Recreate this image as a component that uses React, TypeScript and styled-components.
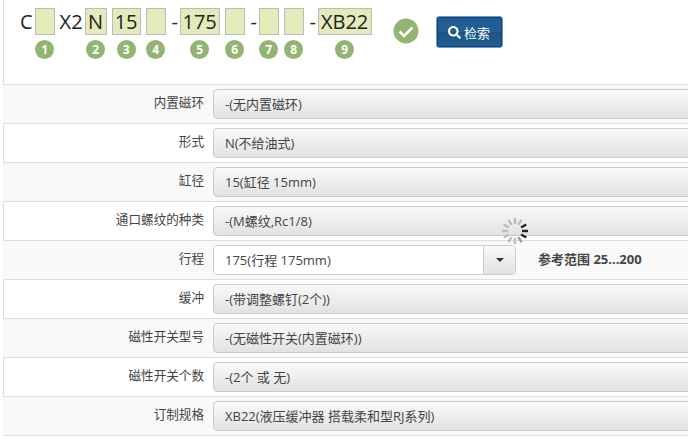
import { createGlobalStyle } from 'styled-components';
import styled from 'styled-components';
import { FaSearch } from 'react-icons/fa';

type Segment = {
  before?: string;
  value: string;
  width: number;
  num: number;
};

type Option = {
  label: string;
  value: string;
  range?: string;
};

const SEGMENTS: Segment[] = [
  { before: 'C', value: '', width: 20, num: 1 },
  { before: 'X2', value: 'N', width: 22, num: 2 },
  { value: '15', width: 29, num: 3 },
  { value: '', width: 20, num: 4 },
  { before: '-', value: '175', width: 40, num: 5 },
  { value: '', width: 20, num: 6 },
  { before: '-', value: '', width: 20, num: 7 },
  { value: '', width: 20, num: 8 },
  { before: '-', value: 'XB22', width: 54, num: 9 },
];

const OPTIONS: Option[] = [
  { label: '内置磁环', value: '-(无内置磁环)' },
  { label: '形式', value: 'N(不给油式)' },
  { label: '缸径', value: '15(缸径 15mm)' },
  { label: '通口螺纹的种类', value: '-(M螺纹,Rc1/8)' },
  { label: '行程', value: '175(行程 175mm)', range: '参考范围 25...200' },
  { label: '缓冲', value: '-(带调整螺钉(2个))' },
  { label: '磁性开关型号', value: '-(无磁性开关(内置磁环))' },
  { label: '磁性开关个数', value: '-(2个 或 无)' },
  { label: '订制规格', value: 'XB22(液压缓冲器 搭载柔和型RJ系列)' },
];

const Global = createGlobalStyle`
  html, body {
    margin: 0;
    padding: 0;
    height: 440px;
    overflow: hidden;
    background: #fff;
  }
  body {
    font-family: "Open Sans", "Noto Sans CJK SC", sans-serif;
    color: #333;
  }
`;

function App() {
  return (
    <Root>
      <Global />
      <CodeBox>
        <Segments>
          {SEGMENTS.map((s) => (
            <SegmentWrap key={s.num}>
              {s.before && <Fixed $dash={s.before === '-'}>{s.before}</Fixed>}
              <SegmentCol>
                <ValueBox $width={s.width}>{s.value}</ValueBox>
                <Num>{s.num}</Num>
              </SegmentCol>
            </SegmentWrap>
          ))}
        </Segments>
        <Check>
          <svg width="26" height="26" viewBox="0 0 26 26">
            <circle cx="13" cy="13" r="12.5" fill="#93b573" />
            <path d="M6.5 13.5l4.5 4.5 8.5-8.5" fill="none" stroke="#fff" strokeWidth="2.6" />
          </svg>
        </Check>
        <SearchButton>
          <FaSearch size={13} />
          检索
        </SearchButton>
      </CodeBox>
      <Rows>
        {OPTIONS.map((o, i) => (
          <Row key={o.label} $odd={i % 2 === 1}>
            <Label>{o.label}</Label>
            {o.range ? (
              <>
                <InputGroup>
                  <TextInput>{o.value}</TextInput>
                  <Addon>
                    <Caret />
                  </Addon>
                </InputGroup>
                <RangeNote>{o.range}</RangeNote>
              </>
            ) : (
              <SelectBox>{o.value}</SelectBox>
            )}
          </Row>
        ))}
      </Rows>
      <Spinner>
        <svg width="30" height="30" viewBox="0 0 30 30">
          {Array.from({ length: 12 }).map((_, i) => (
            <line
              key={i}
              x1="15"
              y1="2"
              x2="15"
              y2="8"
              stroke={i >= 2 && i <= 4 ? '#222' : i === 5 ? '#999' : '#bbb'}
              strokeWidth="2.4"
              transform={`rotate(${i * 30} 15 15)`}
            />
          ))}
        </svg>
      </Spinner>
    </Root>
  );
}

const Root = styled.div`
  position: relative;
  width: 688px;
  height: 440px;
  overflow: hidden;
  padding-left: 3px;
  box-sizing: border-box;
`;

const CodeBox = styled.div`
  height: 85px;
  box-sizing: border-box;
  border-left: 1px solid #ddd;
  border-bottom: 1px solid #ddd;
  display: flex;
  align-items: flex-start;
  padding: 8px 0 0 16px;
  width: 800px;
`;

const Segments = styled.div`
  display: flex;
  align-items: flex-start;
`;

const SegmentWrap = styled.div`
  display: flex;
  align-items: flex-start;
  margin-right: 5px;
`;

const Fixed = styled.span<{ $dash: boolean }>`
  font-size: 20px;
  line-height: 27px;
  width: ${(p) => (p.$dash ? '10px' : 'auto')};
  margin: ${(p) => (p.$dash ? '0 0 0 -1px' : '0 2px 0 0')};
  text-align: center;
  color: #222;
`;

const SegmentCol = styled.div`
  display: flex;
  flex-direction: column;
  align-items: center;
  gap: 5px;
`;

const ValueBox = styled.div<{ $width: number }>`
  width: ${(p) => p.$width}px;
  height: 27px;
  box-sizing: border-box;
  background: #e2ebb9;
  border: 1px solid #bbb;
  font-size: 20px;
  line-height: 25px;
  text-align: center;
  color: #222;
`;

const Num = styled.div`
  width: 19px;
  height: 19px;
  border-radius: 50%;
  background: #93b573;
  color: #fff;
  font-size: 12px;
  font-weight: 700;
  line-height: 19px;
  text-align: center;
`;

const Check = styled.div`
  width: 26px;
  height: 26px;
  margin: 10px 0 0 16px;
`;

const SearchButton = styled.div`
  width: 67px;
  height: 32px;
  margin: 8px 0 0 17px;
  box-sizing: border-box;
  border: 1px solid #6e9be0;
  border-radius: 3px;
  background: linear-gradient(to bottom, #1d5c92 0%, #235f92 50%, #1b5485 51%, #22608f 100%);
  box-shadow: inset 0 0 0 1px #143f66;
  color: #fff;
  font-size: 13px;
  display: flex;
  align-items: center;
  justify-content: center;
  gap: 3px;
`;

const Rows = styled.div`
  display: flex;
  flex-direction: column;
  width: 800px;
`;

const Row = styled.div<{ $odd: boolean }>`
  height: 39px;
  box-sizing: border-box;
  display: flex;
  align-items: flex-start;
  padding-top: 4px;
  background: ${(p) => (p.$odd ? '#fff' : '#f9f9f9')};
  border-bottom: 1px solid #ddd;
  border-left: 1px solid ${(p) => (p.$odd ? '#ddd' : 'transparent')};
`;

const Label = styled.div`
  width: 200px;
  text-align: right;
  font-size: 12.6px;
  line-height: 28px;
  color: #444;
`;

const SelectBox = styled.div`
  margin-left: 9px;
  width: 560px;
  height: 30px;
  box-sizing: border-box;
  border: 1px solid #ccc;
  border-radius: 4px;
  background: linear-gradient(to bottom, #f9f9f9, #e2e2e2);
  font-size: 13px;
  line-height: 29px;
  padding-left: 11px;
  color: #444;
`;

const InputGroup = styled.div`
  margin-left: 9px;
  width: 303px;
  height: 30px;
  box-sizing: border-box;
  border: 1px solid #ccc;
  border-radius: 4px;
  display: flex;
  overflow: hidden;
`;

const TextInput = styled.div`
  flex: 1;
  background: #fff;
  font-size: 13px;
  line-height: 29px;
  padding-left: 11px;
  color: #444;
`;

const Addon = styled.div`
  width: 31px;
  border-left: 1px solid #ccc;
  background: linear-gradient(to bottom, #f9f9f9, #e2e2e2);
  display: flex;
  align-items: center;
  justify-content: center;
`;

const Caret = styled.div`
  width: 0;
  height: 0;
  border-left: 4px solid transparent;
  border-right: 4px solid transparent;
  border-top: 4px solid #333;
`;

const RangeNote = styled.div`
  margin-left: 22px;
  font-size: 13px;
  font-weight: 700;
  line-height: 28px;
  color: #444;
`;

const Spinner = styled.div`
  position: absolute;
  left: 500px;
  top: 216px;
  width: 30px;
  height: 30px;
`;

export default App;
